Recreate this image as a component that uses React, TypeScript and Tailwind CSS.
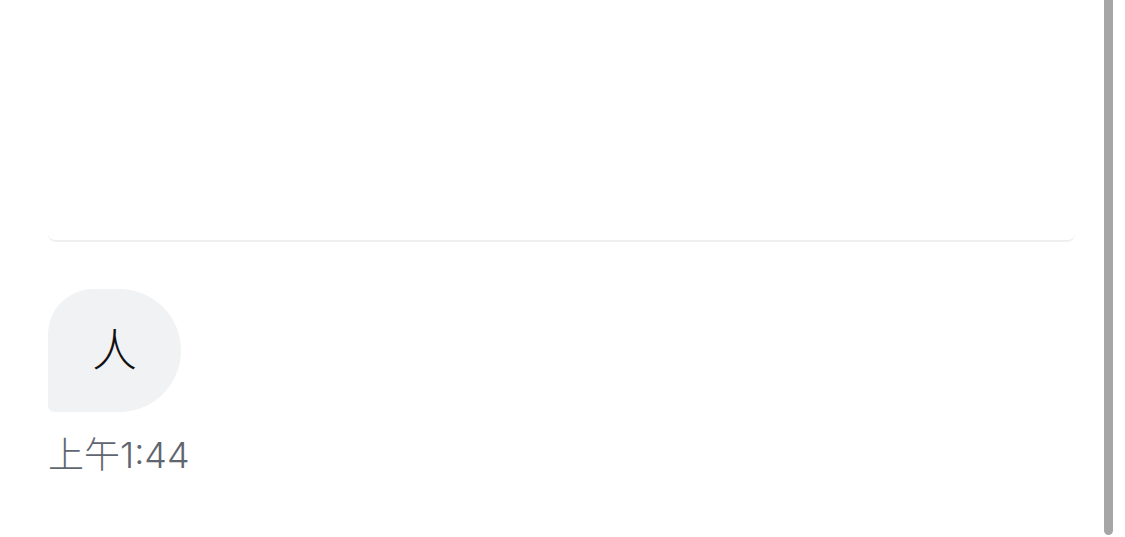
export default function App() {
    return (
        <div className="relative h-[537px] w-full overflow-hidden bg-white font-['Inter','Noto_Sans_CJK_SC',sans-serif]">
            <div className="flex flex-col px-[48px] pr-[50px]">
                <div className="h-[242px] w-full rounded-b-[8px] border-b-2 border-[#f0f0f0]"></div>
                <div className="mt-[47px] flex flex-col items-start">
                    <div className="flex h-[123px] w-[133px] items-center justify-center rounded-[62px] rounded-tl-[46px] rounded-bl-[6px] bg-[#f1f2f4] text-[45px] font-light leading-none text-[#111111]">
                        人
                    </div>
                    <div className="mt-[22px] text-[36px] font-light leading-[43px] text-[#5f6670]">上午1:44</div>
                </div>
            </div>
            <div className="absolute top-0 right-[12px] h-[535px] w-[9px] rounded-b-full bg-[#a6a6a6]"></div>
        </div>
    );
}
